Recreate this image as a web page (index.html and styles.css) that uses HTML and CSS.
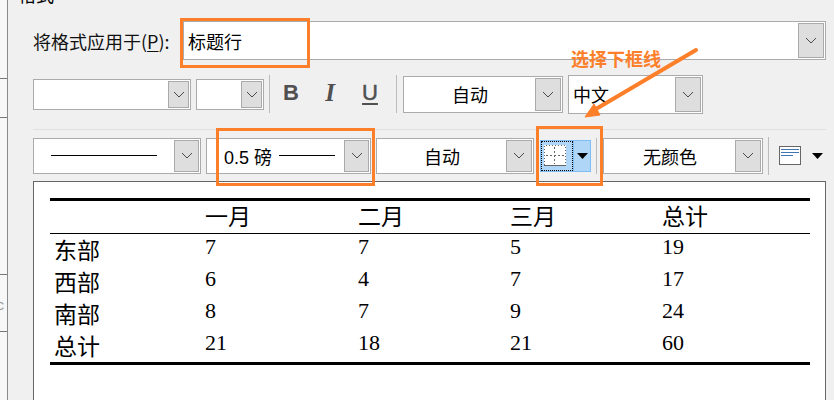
FILE: index.html
```html
<!DOCTYPE html>
<html lang="zh">
<head>
<meta charset="utf-8">
<title>格式</title>
<link rel="stylesheet" href="styles.css">
</head>
<body>
<div class="page">
  <aside class="strip">
    <i class="tick t1"></i><i class="tick t2"></i><i class="tick t3"></i><i class="tick t4"></i>
    <span class="strip-c">c</span>
  </aside>
  <main class="dialog">
    <div class="title">格式</div>
    <div class="row-apply">
      <span class="label">将格式应用于(<u>P</u>):</span>
      <div class="combo combo-apply">
        <span class="value left">标题行</span>
        <span class="drop drop-lg"><svg width="12" height="7" viewBox="0 0 12 7"><path d="M1 1 6 6 11 1" class="chev"/></svg></span>
      </div>
    </div>
    <div class="row-font">
      <div class="combo c-font"><span class="value"></span><span class="drop drop-sm"><svg width="12" height="7" viewBox="0 0 12 7"><path d="M1 1 6 6 11 1" class="chev"/></svg></span></div>
      <div class="combo c-size"><span class="value"></span><span class="drop drop-sm"><svg width="12" height="7" viewBox="0 0 12 7"><path d="M1 1 6 6 11 1" class="chev"/></svg></span></div>
      <span class="sep sep-a"></span>
      <span class="tool tool-b">B</span>
      <span class="tool tool-i">I</span>
      <span class="tool tool-u">U</span>
      <span class="sep sep-b"></span>
      <div class="combo c-auto1"><span class="value center">自动</span><span class="drop"><svg width="12" height="7" viewBox="0 0 12 7"><path d="M1 1 6 6 11 1" class="chev"/></svg></span></div>
      <div class="combo c-lang"><span class="value left">中文</span><span class="drop"><svg width="12" height="7" viewBox="0 0 12 7"><path d="M1 1 6 6 11 1" class="chev"/></svg></span></div>
    </div>
    <div class="divider"></div>
    <div class="row-border">
      <div class="combo c-line"><span class="value"><i class="line-sample ls-long"></i></span><span class="drop drop-md"><svg width="12" height="7" viewBox="0 0 12 7"><path d="M1 1 6 6 11 1" class="chev"/></svg></span></div>
      <div class="combo c-weight"><span class="value left weight">0.5 磅<i class="line-sample ls-short"></i></span><span class="drop drop-md"><svg width="12" height="7" viewBox="0 0 12 7"><path d="M1 1 6 6 11 1" class="chev"/></svg></span></div>
      <div class="combo c-auto2"><span class="value center">自动</span><span class="drop"><svg width="12" height="7" viewBox="0 0 12 7"><path d="M1 1 6 6 11 1" class="chev"/></svg></span></div>
      <div class="split">
        <span class="split-main">
          <svg width="22" height="21" viewBox="0 0 22 21">
            <rect x="0" y="0" width="22" height="21" fill="#fff"/>
            <path d="M10.500 2V19M2 10.500H20" stroke="#666" stroke-dasharray="2 2" fill="none"/>
            <path d="M.5 20V.5H21.500V20" stroke="#666" stroke-dasharray="1 2" fill="none"/>
            <path d="M0 20.500H22" stroke="#666" fill="none"/>
          </svg>
        </span>
        <span class="split-arrow"><svg width="11" height="6" viewBox="0 0 11 6"><path d="M0 0H11L5.500 6Z" fill="#000"/></svg></span>
      </div>
      <span class="sep sep-c"></span>
      <div class="combo c-none"><span class="value center">无颜色</span><span class="drop"><svg width="12" height="7" viewBox="0 0 12 7"><path d="M1 1 6 6 11 1" class="chev"/></svg></span></div>
      <span class="sep sep-d"></span>
      <svg class="align-icon" width="22" height="19" viewBox="0 0 22 19">
        <rect x=".5" y=".5" width="21" height="18" fill="#fff" stroke="#666"/>
        <path d="M2 3.500H20M2 6.500H20M2 9.500H14" stroke="#3f74b5" fill="none"/>
      </svg>
      <svg class="align-arrow" width="11" height="6" viewBox="0 0 11 6"><path d="M0 0H11L5.500 6Z" fill="#000"/></svg>
    </div>
    <section class="preview">
      <table class="sheet">
        <thead>
          <tr><th></th><th>一月</th><th>二月</th><th>三月</th><th>总计</th></tr>
        </thead>
        <tbody>
          <tr><td>东部</td><td>7</td><td>7</td><td>5</td><td>19</td></tr>
          <tr><td>西部</td><td>6</td><td>4</td><td>7</td><td>17</td></tr>
          <tr><td>南部</td><td>8</td><td>7</td><td>9</td><td>24</td></tr>
          <tr><td>总计</td><td>21</td><td>18</td><td>21</td><td>60</td></tr>
        </tbody>
      </table>
    </section>
  </main>
  <div class="mark mark-apply"></div>
  <div class="mark mark-weight"></div>
  <div class="mark mark-split"></div>
  <div class="note">选择下框线</div>
  <svg class="pointer" width="140" height="80" viewBox="0 0 140 80">
    <path d="M117 4 L17 63" stroke="#fd7f2a" stroke-width="4" stroke-linecap="round" fill="none"/>
    <path d="M6 71 L15 58 L21 69 Z" fill="#fd7f2a" stroke="#fd7f2a" stroke-linejoin="round"/>
  </svg>
</div>
</body>
</html>
```
FILE: styles.css
```css
* { box-sizing: border-box; }
html, body { margin: 0; padding: 0; }
body {
  width: 834px;
  height: 400px;
  overflow: hidden;
  background: #f0f0f0;
  font-family: "Noto Sans CJK SC", "Noto Sans", sans-serif;
  color: #000;
}
.page {
  position: relative;
  display: flex;
  width: 834px;
  height: 400px;
  overflow: hidden;
}
.strip {
  position: relative;
  flex: 0 0 8px;
  height: 400px;
  background: #f7f7f7;
  border-right: 1px solid #8a8a8a;
}
.tick {
  position: absolute;
  left: 0;
  width: 7px;
  height: 1px;
  background: #777;
}
.t1 { top: 78px; }
.t2 { top: 117px; }
.t3 { top: 274px; }
.t4 { top: 331px; }
.strip-c {
  position: absolute;
  left: -3px;
  top: 296px;
  font: 14px/18px "Liberation Sans", sans-serif;
  color: #999;
}
.dialog {
  flex: 1;
  height: 400px;
  overflow: hidden;
  padding: 0 8px 0 25px;
  background: #f0f0f0;
}
.title {
  height: 21px;
  margin: -16px 0 16px -15px;
  font-size: 18px;
  line-height: 21px;
}
.row-apply {
  display: flex;
  align-items: center;
  height: 39px;
}
.label {
  width: 150px;
  font-size: 18px;
  line-height: 24px;
  color: #111;
  white-space: nowrap;
}
.label u { text-underline-offset: 2px; }
.combo {
  display: flex;
  align-items: stretch;
  background: #fff;
  border: 1px solid #ababab;
  padding: 1px;
}
.combo-apply {
  flex: 1;
  height: 39px;
}
.value {
  flex: 1;
  display: flex;
  align-items: center;
  min-width: 0;
  font-size: 18px;
  white-space: nowrap;
}
.left { padding-left: 3px; }
.center { justify-content: center; }
.drop {
  display: flex;
  flex: 0 0 26px;
  align-items: center;
  justify-content: center;
  background: #dedede;
  border: 1px solid #aaa;
}
.drop-sm { flex-basis: 21px; }
.drop-md { flex-basis: 25px; }
.chev { fill: none; stroke: #4a4a4a; stroke-width: 1; }
.row-font {
  display: flex;
  align-items: center;
  height: 38px;
  margin-top: 15px;
}
.c-font { width: 158px; height: 31px; }
.c-size { width: 68px; height: 31px; margin-left: 5px; }
.sep { flex: none; width: 1px; background: #bbb; }
.sep-a { height: 38px; margin-left: 5px; }
.tool {
  flex: none;
  width: 24px;
  margin-bottom: 3px;
  text-align: center;
  font: 700 22px/30px "Liberation Sans", sans-serif;
  color: #505050;
}
.tool-b { margin-left: 9px; }
.tool-i { margin-left: 15px; font-family: "Liberation Serif", serif; font-style: italic; font-size: 25px; }
.tool-u { margin-left: 16px; font-weight: 400; -webkit-text-stroke: .5px #505050; text-decoration: underline; text-underline-offset: 3px; }
.sep-b { height: 38px; margin-left: 14px; }
.c-auto1 { width: 160px; height: 37px; margin-left: 6px; }
.c-lang { width: 135px; height: 39px; margin-left: 5px; }
.divider { height: 1px; margin-top: 16px; background: #e0e0e0; }
.row-border {
  display: flex;
  align-items: center;
  height: 37px;
  margin-top: 7px;
}
.c-line { width: 168px; height: 36px; }
.c-weight { width: 165px; height: 36px; margin-left: 5px; }
.c-auto2 { width: 158px; height: 36px; margin-left: 5px; }
.c-line .value { justify-content: center; }
.weight { padding-left: 16px; font: 18px "Liberation Sans", "Noto Sans CJK SC", sans-serif; }
.line-sample { display: block; height: 1px; background: #000; }
.ls-long { width: 106px; margin-left: -2px; }
.ls-short { width: 56px; margin-left: 7px; }
.split {
  display: flex;
  width: 51px;
  height: 32px;
  margin-left: 6px;
  border: 1px solid #7fbdf5;
  background: #b0d6f7;
}
.split-main {
  display: flex;
  flex: 1;
  align-items: center;
  justify-content: center;
  outline: 1px dotted #000;
  outline-offset: -1px;
  padding-right: 4px;
}
.split-arrow {
  display: flex;
  flex: 0 0 17px;
  align-items: center;
  justify-content: center;
  padding-left: 1px;
  border-left: 1px solid #7fbdf5;
}
.sep-c { height: 36px; margin-left: 5px; }
.c-none { width: 160px; height: 36px; margin-left: 6px; }
.sep-d { height: 38px; margin-left: 5px; }
.align-icon { flex: none; margin-left: 10px; }
.align-arrow { flex: none; margin-left: 11px; }
.preview {
  width: 793px;
  height: 230px;
  margin-top: 7px;
  padding: 16px 0 0 16px;
  background: #fff;
  border: 1px solid #666;
  overflow: hidden;
}
.sheet {
  width: 760px;
  table-layout: fixed;
  border-collapse: collapse;
  border-top: 3px solid #000;
  border-bottom: 3px solid #000;
  font-family: "Liberation Serif", "Noto Sans CJK SC", serif;
  font-size: 22px;
}
.sheet th {
  height: 33px;
  padding: 2px 0 0 3px;
  font-size: 23px;
  font-weight: 400;
  text-align: left;
  border-bottom: 1px solid #000;
  line-height: 30px;
}
.sheet td {
  height: 32px;
  padding: 0 0 0 3px;
  line-height: 26px;
  vertical-align: top;
}
.sheet th:first-child { width: 152px; }
.sheet td:first-child {
  width: 152px;
  padding: 3px 0 0 4px;
  font-size: 23px;
  line-height: 29px;
}
.sheet th:nth-child(2), .sheet td:nth-child(2) { width: 153px; }
.sheet th:nth-child(3), .sheet td:nth-child(3) { width: 152px; }
.sheet th:nth-child(4), .sheet td:nth-child(4) { width: 152px; }
.mark {
  position: absolute;
  border: 3px solid #fd7f2a;
}
.mark-apply { left: 180px; top: 18px; width: 130px; height: 50px; }
.mark-weight { left: 216px; top: 128px; width: 159px; height: 58px; }
.mark-split { left: 536px; top: 126px; width: 67px; height: 60px; }
.note {
  position: absolute;
  left: 571px;
  top: 46px;
  font-size: 18px;
  line-height: 24px;
  font-weight: 700;
  color: #fd7f2a;
}
.pointer {
  position: absolute;
  left: 579px;
  top: 46px;
}
```
